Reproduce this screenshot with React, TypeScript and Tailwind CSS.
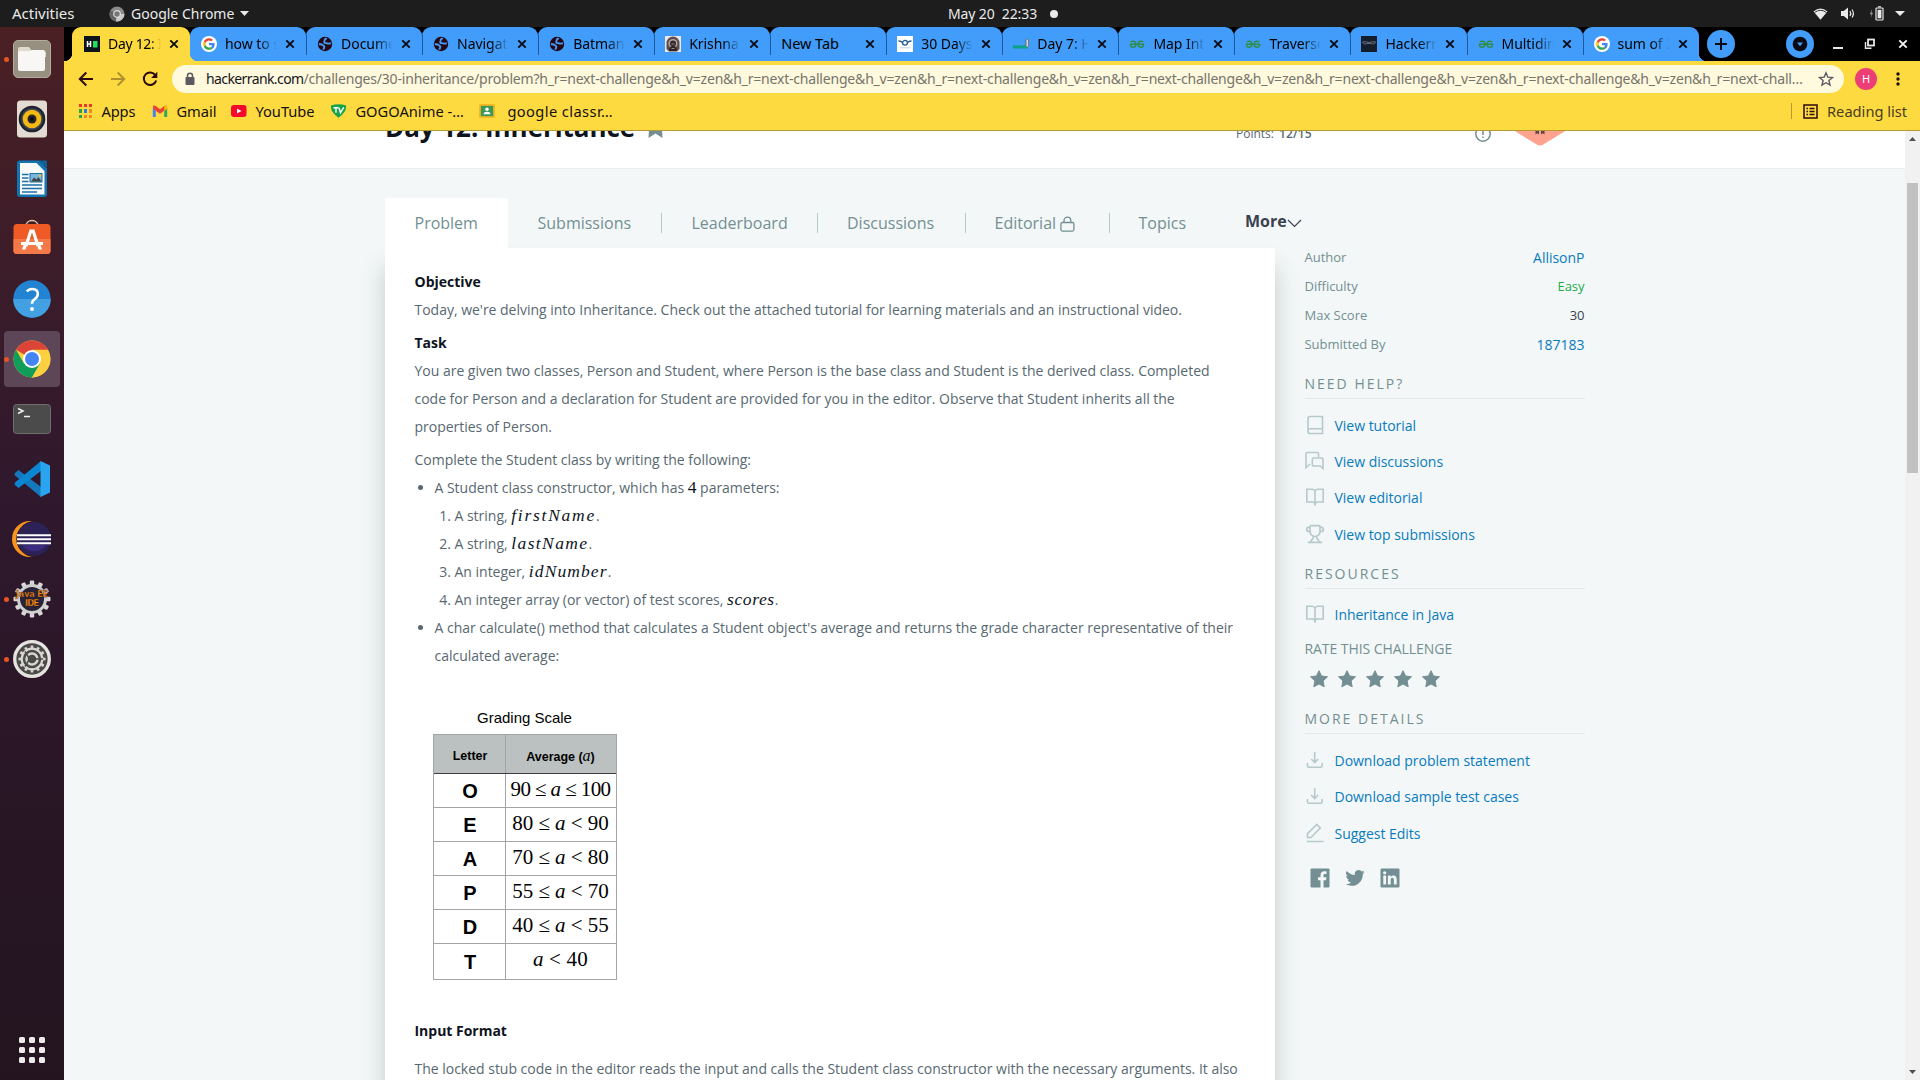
import React from "react";
import { Trophy } from "lucide-react";

const UI = "font-['Noto_Sans',sans-serif]";

/* ---------- favicons ---------- */

const HackerRankIcon = () => (
  <svg className="size-4 shrink-0" viewBox="0 0 16 16">
    <rect width="16" height="16" fill="#0e141e" />
    <path d="M3.5 5v6M6.5 5v6M3.5 8h3" stroke="#fff" strokeWidth="1.5" />
    <rect x="9" y="5" width="4.5" height="6.5" fill="#1ee05a" />
  </svg>
);

const GoogleIcon = () => (
  <svg className="size-4" viewBox="0 0 48 48">
    <circle cx="24" cy="24" r="24" fill="#fff" />
    <g transform="translate(6.5 6.5) scale(.73)">
      <path fill="#EA4335" d="M24 9.5c3.54 0 6.71 1.22 9.21 3.6l6.85-6.85C35.9 2.38 30.47 0 24 0 14.62 0 6.51 5.38 2.56 13.22l7.98 6.19C12.43 13.72 17.74 9.5 24 9.5z" />
      <path fill="#4285F4" d="M46.98 24.55c0-1.57-.15-3.09-.38-4.55H24v9.02h12.94c-.58 2.96-2.26 5.48-4.78 7.18l7.73 6c4.51-4.18 7.09-10.36 7.09-17.65z" />
      <path fill="#FBBC05" d="M10.53 28.59c-.48-1.45-.76-2.99-.76-4.59s.27-3.14.76-4.59l-7.98-6.19C.92 16.46 0 20.12 0 24c0 3.88.92 7.54 2.56 10.78l7.97-6.19z" />
      <path fill="#34A853" d="M24 48c6.48 0 11.93-2.13 15.89-5.81l-7.73-6c-2.15 1.45-4.92 2.3-8.16 2.3-6.26 0-11.57-4.22-13.47-9.91l-7.98 6.19C6.51 42.62 14.62 48 24 48z" />
    </g>
  </svg>
);

const GlobeIcon = () => (
  <svg className="size-4" viewBox="0 0 16 16">
    <circle cx="8" cy="8" r="7.2" fill="#260714" />
    <path
      d="M1.800 8.300C3.500 8 5 8.300 6 9.300c.8.800 1.500.7 1.300 1.800-.1.900-.9 1.100-.8 2.700M9.800 2.200C8.500 3 7.300 3.200 7.600 4.500c.2 1-.8 1.300-.3 2.100.6.900 2 .2 3 .8.9.6 1.800.2 3.600-.2"
      fill="none"
      stroke="#429cf9"
      strokeWidth="1.900"
    />
  </svg>
);

const KrishnaIcon = () => (
  <svg className="size-4" viewBox="0 0 16 16">
    <rect width="16" height="16" fill="#ece8e8" />
    <path d="M1.500 13V7a6.500 6.500 0 0 1 13 0v6L12 15.500H4z" fill="#5f4c4d" />
    <circle cx="8" cy="7.500" r="4.500" fill="#b3a6a2" />
    <circle cx="8" cy="7.500" r="3" fill="#33262a" />
    <path d="M4 15c0-3.500 1.500-5 4-5s4 1.500 4 5z" fill="#2d2226" />
    <path d="M6.500 8h3M6.500 12.500h3" stroke="#b3a6a2" strokeWidth=".8" />
  </svg>
);

const DaysIcon = () => (
  <svg className="size-4" viewBox="0 0 16 16">
    <rect width="16" height="16" fill="#fff" />
    <path d="M1.500 5c2 0 3 .3 4 1.500M14.500 5c-2 0-3 .3-4 1.500" stroke="#1f5a8c" strokeWidth="1.400" fill="none" />
    <circle cx="8" cy="6.800" r="2.400" fill="none" stroke="#1f5a8c" strokeWidth="1.300" />
    <path d="M2.500 11.800h11" stroke="#b9c6d2" strokeWidth=".8" />
  </svg>
);

const Day7Icon = () => (
  <svg className="size-4" viewBox="0 0 16 16">
    <path d="M0 9.500c2-.8 3 .6 5-.1s4 .6 6 .1 3 0 4-.3v3.200H0z" fill="#0ba284" />
    <path d="M13 10.500V4a1.400 1.400 0 0 1 2.600 0v6.500" fill="#d8d5cf" stroke="#555" strokeWidth=".7" />
  </svg>
);

const GfgIcon = () => (
  <svg className="size-4" viewBox="0 0 16 16" fill="none" stroke="#2f8d46" strokeWidth="1.500">
    <path d="M1 8.200h14M2 6C3.200 4.600 7 4.800 7 8.200s-3.800 3.600-5 2.200c-.5-.6-.6-1.400-.5-2.200M14 6c-1.200-1.400-5-1.200-5 2.200s3.800 3.600 5 2.200c.5-.6.6-1.400.5-2.200" />
  </svg>
);

const DarkIcon = () => (
  <svg className="size-4" viewBox="0 0 16 16">
    <rect width="16" height="16" fill="#151c2c" />
    <path d="M1.500 6c2-.6 4 0 6.500.5 2.500-.5 4.500-1.100 6.500-.5-.5 1.800-2.500 2.400-4 1.700L8 7.300l-2.500.4C4 8.400 2 7.800 1.500 6z" fill="none" stroke="#8a909c" strokeWidth=".7" />
  </svg>
);

const tabs: { icon: React.ReactNode; title: string }[] = [
  { icon: <GoogleIcon />, title: "how to s" },
  { icon: <GlobeIcon />, title: "Docume" },
  { icon: <GlobeIcon />, title: "Navigati" },
  { icon: <GlobeIcon />, title: "Batman" },
  { icon: <KrishnaIcon />, title: "Krishna" },
  { icon: null, title: "New Tab" },
  { icon: <DaysIcon />, title: "30 Days" },
  { icon: <Day7Icon />, title: "Day 7: H" },
  { icon: <GfgIcon />, title: "Map Int" },
  { icon: <GfgIcon />, title: "Traverse" },
  { icon: <DarkIcon />, title: "Hackerr" },
  { icon: <GfgIcon />, title: "Multidin" },
  { icon: <GoogleIcon />, title: "sum of 2" },
];

const CloseX = ({ color = "#0b0b14" }: { color?: string }) => (
  <svg className="size-2.5 shrink-0" viewBox="0 0 10 10">
    <path d="M1.300 1.300l7.400 7.400M8.700 1.300L1.300 8.700" stroke={color} strokeWidth="1.900" />
  </svg>
);

const TabStrip = () => (
  <div className="flex h-[34px] bg-black pl-2">
    <div className="relative z-10 flex w-[118px] shrink-0 items-center rounded-t-[9px] bg-[#fddb40] pb-[1px] pl-3">
      <span className="absolute bottom-0 -left-2 size-2 bg-[radial-gradient(circle_at_0_0,transparent_8px,#fddb40_8.5px)]" />
      <span className="absolute -right-2 bottom-0 size-2 bg-[radial-gradient(circle_at_100%_0,transparent_8px,#fddb40_8.5px)]" />
      <HackerRankIcon />
      <span className="ml-2 w-[53px] overflow-hidden text-[14px] tracking-[-0.3px] whitespace-nowrap text-black [mask-image:linear-gradient(to_right,black_80%,transparent)]">
        Day 12: I
      </span>
      <span className="ml-2 flex">
        <CloseX />
      </span>
    </div>
    {tabs.map((t, i) => (
      <div key={i} className="relative flex w-[116.05px] shrink-0 items-center rounded-t-[9px] bg-[#429cf9] pb-[1px] pl-[11px]">
        {i > 0 && <span className="absolute top-2 bottom-1.5 left-0 w-px bg-[#1d5a9c]" />}
        {t.icon && <span className="mr-2 shrink-0">{t.icon}</span>}
        {t.icon ? (
          <span className="w-[52px] overflow-hidden text-[14px] tracking-[-0.05px] whitespace-nowrap text-black [mask-image:linear-gradient(to_right,black_65%,transparent)]">
            {t.title}
          </span>
        ) : (
          <span className="w-[79px] text-[14.500px] tracking-[-0.05px] whitespace-nowrap text-black">{t.title}</span>
        )}
        <span className={t.icon ? "ml-2 flex" : "ml-[5px] flex"}>
          <CloseX />
        </span>
        {i === tabs.length - 1 && (
          <span className="absolute -right-2 bottom-0 size-2 bg-[radial-gradient(circle_at_100%_0,transparent_8px,#429cf9_8.5px)]" />
        )}
      </div>
    ))}
    <div className="flex flex-1 items-center justify-between pr-3 pl-[8px]">
      <span className="flex size-7 items-center justify-center rounded-full bg-[#429cf9]">
        <svg className="size-3.5" viewBox="0 0 14 14">
          <path d="M7 1v12M1 7h12" stroke="#0a0a14" strokeWidth="2" />
        </svg>
      </span>
      <div className="flex items-center">
        <span className="flex size-7 items-center justify-center rounded-full bg-[#429cf9]">
          <svg className="size-4" viewBox="0 0 16 16">
            <circle cx="8" cy="8" r="7.300" fill="#0a0a14" />
            <path d="M5 6.500h6L8 10.200z" fill="#429cf9" />
          </svg>
        </span>
        <svg className="ml-[18px] h-3 w-3" viewBox="0 0 12 12">
          <path d="M1 10h10" stroke="#e8e8e8" strokeWidth="2" />
        </svg>
        <svg className="ml-5 h-3 w-3" viewBox="0 0 12 12" fill="none" stroke="#e8e8e8">
          <rect x="4" y="1.500" width="6" height="6" strokeWidth="1.800" />
          <path d="M1.500 4v6.300h6" strokeWidth="1.400" />
        </svg>
        <span className="ml-[22px] flex">
          <CloseX color="#f2f2f2" />
        </span>
      </div>
    </div>
  </div>
);

const Toolbar = () => (
  <div className="flex h-9 items-center bg-[#fddb40] pl-[14px]">
    <svg className="size-4" viewBox="0 0 16 16" fill="none" stroke="#2b0a10" strokeWidth="2">
      <path d="M15 8H2.500M8.300 1.500L1.800 8l6.500 6.500" />
    </svg>
    <svg className="ml-4 size-4" viewBox="0 0 16 16" fill="none" stroke="#b0902f" strokeWidth="2">
      <path d="M1 8h12.500M7.700 1.500L14.200 8l-6.500 6.500" />
    </svg>
    <svg className="ml-4 size-4" viewBox="0 0 16 16" fill="none" stroke="#2b0a10" strokeWidth="2">
      <path d="M13.400 4.200A6.300 6.300 0 1 0 14.200 9.500" />
      <path d="M15.300 0.800V7H9.100z" fill="#2b0a10" stroke="none" />
    </svg>
    <div className="ml-[14px] flex h-7 w-[1672px] items-center rounded-full bg-[#fff9de] pl-[13px]">
      <svg className="h-3.5 w-[10px] shrink-0" viewBox="0 0 10 14">
        <rect x="0.500" y="5" width="9" height="8" rx="1" fill="#5c5960" />
        <path d="M2.500 5.500V3.700a2.500 2.500 0 0 1 5 0v1.800" fill="none" stroke="#5c5960" strokeWidth="1.500" />
      </svg>
      <div className="ml-[11px] w-[1600px] text-[14px] leading-7 whitespace-nowrap text-[#76746b]">
        <span className="tracking-[-0.6px] text-[#16161c]">hackerrank.com</span>
        <span className="tracking-[-0.193px]">
          /challenges/30-inheritance/problem?h_r=next-challenge&amp;h_v=zen&amp;h_r=next-challenge&amp;h_v=zen&amp;h_r=next-challenge&amp;h_v=zen&amp;h_r=next-challenge&amp;h_v=zen&amp;h_r=next-challenge&amp;h_v=zen&amp;h_r=next-challenge&amp;h_v=zen&amp;h_r=next-chall…
        </span>
      </div>
      <svg className="ml-[12px] size-4 shrink-0" viewBox="0 0 16 16" fill="none" stroke="#5c5960" strokeWidth="1.400">
        <path d="M8 1.800l1.800 4.300 4.700.4-3.600 3 1.100 4.600L8 11.700l-4 2.400 1.100-4.600-3.600-3 4.700-.4z" />
      </svg>
    </div>
    <span className="ml-[11px] flex size-[22px] items-center justify-center rounded-full bg-[#ec3d74] text-[11px] text-white">H</span>
    <svg className="ml-[19px] h-4 w-1" viewBox="0 0 4 16" fill="#1d1014">
      <circle cx="2" cy="3" r="1.700" />
      <circle cx="2" cy="8" r="1.700" />
      <circle cx="2" cy="13" r="1.700" />
    </svg>
  </div>
);

const appDots = [
  "bg-[#e8392b]",
  "bg-[#e8392b]",
  "bg-[#e8392b]",
  "bg-[#2ba24c]",
  "bg-[#2b7de9]",
  "bg-[#f08a1c]",
  "bg-[#2ba24c]",
  "bg-[#f08a1c]",
  "bg-[#f08a1c]",
];

const Bookmarks = () => (
  <div className="flex h-[33px] items-center bg-[#fddb40] pb-[5px] pl-[14.500px] text-[14.67px] text-[#151010]">
    <div className="grid grid-cols-3 gap-[2px]">
      {appDots.map((c, i) => (
        <span key={i} className={"size-[3.3px] " + c} />
      ))}
    </div>
    <span className="ml-[9px] w-[36px] tracking-[-0.1px]">Apps</span>
    <svg className="ml-[15px] h-[12px] w-[16px]" viewBox="0 0 16 12">
      <path d="M0.800 2v10h3V5.500z" fill="#4285f4" />
      <path d="M15.200 2v10h-3V5.500z" fill="#34a853" />
      <path d="M0.800 1.500C1.500 0 3 .4 3.800 1L8 4.200 12.200 1c.8-.6 2.300-1 3 .5L14 4.600 8 8.800 2 4.600z" fill="#ea4335" />
      <path d="M12.200 1c1.500-1 3-.4 3 1.200v1.600l-3 2.300z" fill="#fbbc04" />
    </svg>
    <span className="ml-[8px] w-[40px]">Gmail</span>
    <svg className="ml-[15px] h-[12px] w-[16px]" viewBox="0 0 16 12">
      <rect width="15.500" height="12" rx="3" fill="#f50a2c" />
      <path d="M6 3.500v5L10.500 6z" fill="#fff" />
    </svg>
    <span className="ml-[8px] w-[61px]">YouTube</span>
    <svg className="ml-[14px] h-[14px] w-[17px]" viewBox="0 0 17 14">
      <path d="M1 1.500Q8.500-.8 16 1.500 17 8 8.500 13.800 0 8 1 1.500z" fill="#17a349" />
      <path d="M3.500 3.800h5M6 3.800v5M9 3.800l1.500 5 3.200-5.500" stroke="#fff" strokeWidth="1.400" fill="none" />
    </svg>
    <span className="ml-[8px] w-[111px] tracking-[0.02px]">GOGOAnime -…</span>
    <svg className="ml-[13px] h-[14px] w-[16px]" viewBox="0 0 16 14">
      <rect width="16" height="14" rx="1.500" fill="#f5b921" />
      <rect x="1.800" y="1.800" width="12.400" height="10.400" fill="#3c9759" />
      <circle cx="8" cy="5.300" r="1.700" fill="#fff" />
      <path d="M4.500 10.200q0-2.500 3.500-2.500t3.500 2.500z" fill="#fff" />
    </svg>
    <span className="ml-[12px] tracking-[0.4px]">google classr…</span>
    <div className="mr-[13px] ml-auto flex items-center">
      <span className="h-4 w-px bg-[#b99a30]" />
      <svg className="ml-[11px] size-[15px]" viewBox="0 0 15 15" fill="none" stroke="#2b0a10" strokeWidth="1.500">
        <rect x="1" y="1" width="13" height="13" />
        <path d="M3.500 4.500h1.500M6.500 4.500h5M3.500 7.500h1.500M6.500 7.500h5M3.500 10.500h1.500M6.500 10.500h5" />
      </svg>
      <span className="ml-[9px] w-[80px] whitespace-nowrap text-[#4a3c1e]">Reading list</span>
    </div>
  </div>
);

/* ---------- desktop shell ---------- */

const TopBar = () => (
  <header className="grid h-[27px] grid-cols-3 items-center bg-[#1d1d1d] text-[15px] text-[#eaeaea]">
    <div className="flex items-center pl-3">
      <span className="w-[97px]">Activities</span>
      <svg className="size-4" viewBox="0 0 16 16">
        <circle cx="8" cy="8" r="7.500" fill="#8a8a8a" />
        <path d="M8 8L1.500 4.200A7.500 7.500 0 0 0 7 15.400z" fill="#646464" />
        <path d="M8 8h7.500A7.500 7.500 0 0 1 7 15.400z" fill="#c9c9c9" />
        <circle cx="8" cy="8" r="3.300" fill="#777" stroke="#ddd" strokeWidth="1.200" />
      </svg>
      <span className="ml-[6px] text-[14px]">Google Chrome</span>
      <svg className="ml-[6px] h-[5px] w-[9px]" viewBox="0 0 9 5">
        <path d="M0 0h9L4.500 5z" fill="#eaeaea" />
      </svg>
    </div>
    <div className="flex items-center justify-center pl-[86px] text-[14px]">
      <span className="tracking-[-0.1px] whitespace-pre">May 20  22:33</span>
      <span className="ml-[13px] size-2 rounded-full bg-[#eaeaea]" />
    </div>
    <div className="flex items-center justify-end pr-[15px]">
      <svg className="h-3 w-[15px]" viewBox="0 0 15 12">
        <path d="M0.500 3.500Q7.500-2.300 14.500 3.500L7.500 11.800z" fill="#eaeaea" />
        <path d="M1.500 4.500Q7.500 0 13.500 4.500" fill="none" stroke="#1d1d1d" strokeWidth=".9" />
      </svg>
      <svg className="ml-[13px] h-[13px] w-[15px]" viewBox="0 0 15 13">
        <path d="M0 4h2.800L7 .5v12L2.800 9H0z" fill="#eaeaea" />
        <path d="M9 4q1.500 2.500 0 5M11 2.500q2.800 4 0 8" fill="none" stroke="#eaeaea" strokeWidth="1.200" />
      </svg>
      <svg className="ml-[13px] h-[15px] w-[15px]" viewBox="0 0 15 15">
        <path d="M3 3L.8 8.300h1.700L1.800 12 4 6.800H2.500z" fill="#999" />
        <rect x="7" y="2" width="7" height="12" rx=".8" fill="none" stroke="#eaeaea" strokeWidth="1.200" />
        <rect x="8.600" y="3.800" width="3.800" height="8.500" fill="#eaeaea" />
        <path d="M9 .8h3" stroke="#eaeaea" strokeWidth="1.200" />
      </svg>
      <svg className="ml-[11px] h-[5px] w-[10px]" viewBox="0 0 10 5">
        <path d="M0 0h10L5 5z" fill="#eaeaea" />
      </svg>
    </div>
  </header>
);

const FilesIcon = () => (
  <svg className="size-10" viewBox="0 0 40 40">
    <rect x="1.500" y="1.500" width="37" height="37" rx="4.500" fill="#978f7f" stroke="#b5ad9b" />
    <path d="M6 31V10a2 2 0 0 1 2-2h9l3 4h12a2 2 0 0 1 2 2v4H6z" fill="#e0dace" />
    <path d="M6 14q0-2 2-2h9q1.500 0 3-1h11q2 0 2 2v17q0 2-2 2H8q-2 0-2-2z" fill="#f8f7f5" />
  </svg>
);
const RhythmIcon = () => (
  <svg className="size-10" viewBox="0 0 40 40">
    <rect x="5" y="1.500" width="30" height="37" rx="3.500" fill="#e2dcd2" />
    <circle cx="20" cy="20" r="13.300" fill="#20242e" />
    <circle cx="20" cy="20" r="10.800" fill="#3c4557" />
    <circle cx="20" cy="20" r="9.300" fill="#f3b911" />
    <circle cx="20" cy="20" r="4.500" fill="#24242a" />
    <circle cx="20" cy="20" r="2" fill="#08080a" />
  </svg>
);
const WriterIcon = () => (
  <svg className="size-10" viewBox="0 0 40 40">
    <path d="M8 1.500h19L35 9.500V35a3 3 0 0 1-3 3H8a3 3 0 0 1-3-3V4.500a3 3 0 0 1 3-3z" fill="#1274b0" />
    <path d="M26 1.500h9V9z" fill="#0f6296" />
    <path d="M8 4h16.500L32.500 12v23.500H8z" fill="#f8f9fa" />
    <path d="M10 15.500h6.500M10 19h6.500M10 22.500h6.500M10 26h20M10 29.500h20M10 33h15" stroke="#1a71a8" strokeWidth="1.500" />
    <rect x="18" y="14.500" width="12" height="8.500" fill="#79b5dc" stroke="#1a71a8" />
    <path d="M19 22.500l3-4 2.500 2 2-2.500 3 4.500z" fill="#444" />
    <circle cx="28" cy="16.800" r="1.300" fill="#f5c327" />
  </svg>
);
const SoftwareIcon = () => (
  <svg className="size-10" viewBox="0 0 40 40">
    <path d="M14 7.500C14 -.5 26 -.5 26 7.500" fill="none" stroke="#e8c9a0" strokeWidth="1.500" />
    <rect x="1.500" y="5" width="37" height="30" rx="3.500" fill="#f05a24" />
    <path d="M1.500 20h37v11.500a3.500 3.500 0 0 1-3.500 3.500H5a3.500 3.500 0 0 1-3.500-3.500z" fill="#f37a48" />
    <path d="M14 27l4.800-15h2.400L26 27" stroke="#fff" strokeWidth="3.200" fill="none" />
    <path d="M9 23h22v3H9zM11.500 26h3.500l-1.500 4.500h-3.500zM28.500 26H25l1.500 4.500h3.500z" fill="#fff" />
  </svg>
);
const HelpIcon = () => (
  <svg className="size-10" viewBox="0 0 40 40">
    <circle cx="20" cy="20" r="18.700" fill="#2283d2" />
    <path d="M1.300 20a18.700 18.700 0 0 0 37.400 0z" fill="#42a0e3" />
    <path d="M14.800 12.500q2-2.500 5.400-2.500 5.600 0 5.600 5 0 2.800-3 5-2.800 2-2.800 4.700" fill="none" stroke="#fff" strokeWidth="2.500" />
    <circle cx="20" cy="30" r="2" fill="#fff" />
  </svg>
);
const ChromeIcon = () => (
  <svg className="size-10" viewBox="0 0 40 40">
    <circle cx="20" cy="20" r="18.500" fill="#fcd03f" />
    <path d="M20 20L4 10.800A18.500 18.500 0 0 1 36 10.800H20z" fill="#dc4437" />
    <path d="M4 10.800A18.500 18.500 0 0 0 20 38.500L28 24.500 12 24.500z" fill="#109d59" />
    <path d="M36 11H20l8 14-8 13.500A18.500 18.500 0 0 0 36 11z" fill="#fcd03f" />
    <circle cx="20" cy="20" r="9" fill="#fff" />
    <circle cx="20" cy="20" r="7" fill="#4585f3" />
  </svg>
);
const TerminalIcon = () => (
  <svg className="size-10" viewBox="0 0 40 40">
    <rect x="1.500" y="5.500" width="37" height="29" rx="3" fill="#4b4b4b" stroke="#6e6e6e" />
    <path d="M6 9.500l5 2.500-5 2.500M12 17.500h6" fill="none" stroke="#f0f0f0" strokeWidth="1.500" />
  </svg>
);
const CodeIcon = () => (
  <svg className="size-10" viewBox="0 0 40 40">
    <path d="M2.500 14.500L6.500 11 29 28v10L3 16.500z" fill="#1478bd" />
    <path d="M2.500 25.500L6.500 29 29 12V2L3 23.500z" fill="#0b86d0" />
    <path d="M28.500 2L38 6.500v27L28.500 38z" fill="#2aa4f0" />
  </svg>
);
const EclipseIcon = () => (
  <svg className="size-10" viewBox="0 0 40 40">
    <circle cx="18" cy="20" r="18" fill="#f7941e" />
    <circle cx="22.300" cy="20" r="17.500" fill="#2c2255" stroke="#2b1429" />
    <path d="M10 26a13 10 0 0 0 24 0z" fill="#3b2c80" />
    <path d="M5 16.300h34M5 20.300h34M5 24.300h34" stroke="#fff" strokeWidth="2" />
  </svg>
);
const gearTeeth = [0, 30, 60, 90, 120, 150, 180, 210, 240, 270, 300, 330];
const JavaEEIcon = () => (
  <svg className="size-10" viewBox="0 0 40 40">
    {gearTeeth.map((a) => (
      <rect key={a} x="17.800" y="1.500" width="4.400" height="7" rx="1" fill="#d7d7d7" transform={`rotate(${a} 20 20)`} />
    ))}
    <circle cx="20" cy="20" r="13.500" fill="#29233a" stroke="#cfcfcf" strokeWidth="3" />
    <text x="20" y="18" textAnchor="middle" fill="#ff8c1a" stroke="#2a1408" strokeWidth=".3" className="font-['DejaVu_Sans',sans-serif] text-[8px] font-bold" textLength="32">
      Java EE
    </text>
    <text x="20" y="27" textAnchor="middle" fill="#ff8c1a" stroke="#2a1408" strokeWidth=".3" className="font-['DejaVu_Sans',sans-serif] text-[8.5px] font-bold" textLength="14">
      IDE
    </text>
  </svg>
);
const SettingsIcon = () => (
  <svg className="size-10" viewBox="0 0 40 40">
    <circle cx="20" cy="20" r="17.300" fill="#4a4a48" stroke="#e6e4e0" strokeWidth="3.300" />
    {gearTeeth.map((a) => (
      <rect key={a} x="18.700" y="6.500" width="2.600" height="4" fill="#d8d6d2" transform={`rotate(${a} 20 20)`} />
    ))}
    <circle cx="20" cy="20" r="10.300" fill="none" stroke="#d8d6d2" strokeWidth="2.200" />
    <circle cx="20" cy="20" r="5.500" fill="none" stroke="#d8d6d2" strokeWidth="2.500" />
    <path d="M17.500 20L13 12.500M17.500 20L13 27.500M22 20h9" stroke="#4a4a48" strokeWidth="1.500" />
  </svg>
);

const dock = [
  { Icon: FilesIcon, dot: true },
  { Icon: RhythmIcon },
  { Icon: WriterIcon },
  { Icon: SoftwareIcon },
  { Icon: HelpIcon },
  { Icon: ChromeIcon, dot: true, active: true },
  { Icon: TerminalIcon },
  { Icon: CodeIcon },
  { Icon: EclipseIcon },
  { Icon: JavaEEIcon, dot: true },
  { Icon: SettingsIcon, dot: true },
];

const Dock = () => (
  <nav className="flex w-16 shrink-0 flex-col items-center gap-1 bg-linear-to-b from-[#4a2024] via-[#2f182d] via-45% to-[#23141f] pt-1">
    {dock.map(({ Icon, dot, active }, i) => (
      <div
        key={i}
        className={"relative flex size-14 items-center justify-center rounded " + (active ? "bg-[#5c4658]" : "")}
      >
        {dot && <span className="absolute top-[25.5px] left-0 size-[5px] rounded-full bg-[#e95420]" />}
        <Icon />
      </div>
    ))}
    <div className="mt-auto mb-[17px] grid grid-cols-3 gap-1">
      {Array.from({ length: 9 }, (_, i) => (
        <span key={i} className="size-1.5 rounded-[1.5px] bg-[#efebeb]" />
      ))}
    </div>
  </nav>
);

/* ---------- page ---------- */

const PageHeader = () => (
  <div className="h-[38px] shrink-0 overflow-hidden border-b border-[#e9eeee] bg-white pl-[321px]">
    <div className="-mt-5 flex h-10 items-start">
      <h1 className="w-[263px] text-[26px] leading-8 font-bold tracking-[-0.05px] whitespace-nowrap text-[#0e141e]">Day 12: Inheritance</h1>
      <svg className="mt-[10px] h-[17px] w-[15px]" viewBox="0 0 14 17">
        <path d="M1 0h12l1 17-7-4.500L0 17z" fill="#738f93" />
      </svg>
      <p className="mt-[13px] ml-[573px] text-[12px] leading-5 whitespace-nowrap text-[#576871]">
        Points: <b className="ml-0.5 font-semibold tracking-[0.1px]">12/15</b>
      </p>
      <svg className="mt-[15px] ml-[163px] size-4" viewBox="0 0 16 16" fill="none" stroke="#738f93" strokeWidth="1.500">
        <circle cx="8" cy="8" r="7.200" />
        <path d="M8 4v5M8 10.500v1.500" />
      </svg>
      <svg className="ml-[21px] h-[35px] w-[56px]" viewBox="0 0 56 35">
        <path d="M0 0h56v18Q52 21 32 33q-4 3-8 0Q4 21 0 18z" fill="#ffa38f" />
        <path d="M23.500 23.500v-4h3.500v4l-1.700-1.200zM29 23.500v-4h3.500v4l-1.700-1.200z" fill="#5f4348" />
      </svg>
    </div>
  </div>
);

const Sep = () => <span className="h-5 w-px bg-[#b7c9cc]" />;

const NavTabs = () => (
  <div className="flex h-[50px] items-center text-[16px] text-[#738f93]">
    <a className="relative z-10 flex h-full w-[123px] items-center bg-white pl-[29.500px]">Problem</a>
    <a className="w-[153px] pl-[29.500px]">Submissions</a>
    <Sep />
    <a className="w-[155px] pl-[29.5px]">Leaderboard</a>
    <Sep />
    <a className="w-[147px] pl-[29px]">Discussions</a>
    <Sep />
    <a className="flex w-[143px] items-center pl-[28.5px]">
      <span className="w-[61px]">Editorial</span>
      <svg className="mt-[2px] ml-[4px] h-[16px] w-[15px]" viewBox="0 0 15 16" fill="none" stroke="#738f93" strokeWidth="1.300">
        <rect x=".9" y="6.500" width="13" height="8.600" rx="1.500" />
        <path d="M4 6.500V4.500a3.400 3.400 0 0 1 6.800 0v2" />
      </svg>
    </a>
    <Sep />
    <a className="w-[135px] pl-[28.5px]">Topics</a>
    <span className="-mt-[4px] flex items-center font-bold text-[#39424e]">
      More
      <svg className="mt-1 h-[9px] w-[15px]" viewBox="0 0 15 9" fill="none" stroke="#39424e" strokeWidth="1.200">
        <path d="M1 1l6.500 6.500L14 1" />
      </svg>
    </span>
  </div>
);

const M = ({ children, className = "" }: { children: string; className?: string }) => (
  <span className={"inline-block font-['Liberation_Serif',serif] text-[17.5px] leading-none text-[#0e141e] italic " + className}>{children}</span>
);

const grades: [string, React.ReactNode, string][] = [
  ["O", <>90 ≤ <i>a</i> ≤ 100</>, "tracking-[-0.6px]"],
  ["E", <>80 ≤ <i>a</i> &lt; 90</>, "tracking-[-0.05px]"],
  ["A", <>70 ≤ <i>a</i> &lt; 80</>, "tracking-[-0.05px]"],
  ["P", <>55 ≤ <i>a</i> &lt; 70</>, "tracking-[-0.05px]"],
  ["D", <>40 ≤ <i>a</i> &lt; 55</>, "tracking-[-0.05px]"],
  ["T", <><i>a</i> &lt; 40</>, "tracking-[0.2px]"],
];

const GradingTable = () => (
  <div className="mt-[36px] ml-[18px] w-[184px] font-['Liberation_Sans',sans-serif] text-black">
    <div className="h-[28px] text-center text-[15px] leading-6">Grading Scale</div>
    <div className="border border-[#a3a5a5]">
      <div className="flex h-[39px] border-b border-[#3c3e3e] bg-[#bbc0c0] text-[12.5px] font-bold">
        <span className="flex w-[72px] items-center justify-center border-r border-[#a3a5a5] pt-1 pl-0.5">Letter</span>
        <span className="flex flex-1 items-center justify-center pt-[5px]">
          <span>
            Average (<i className="font-['Liberation_Serif',serif] text-[16px] leading-3 font-normal">a</i>)
          </span>
        </span>
      </div>
      {grades.map(([letter, range, tracking]) => (
        <div key={letter} className="flex h-[34.1px] border-b border-[#a3a5a5] last:border-b-0">
          <span className="flex w-[72px] items-center justify-center border-r border-[#a3a5a5] pt-px pl-0.5 text-[20px] font-bold">{letter}</span>
          <span
            className={
              "flex-1 text-center font-['Liberation_Serif',serif] text-[21px] leading-[31px] whitespace-nowrap " + tracking
            }
          >
            {range}
          </span>
        </div>
      ))}
    </div>
  </div>
);

const Article = () => (
  <article className="h-[900px] w-[890px] shrink-0 bg-white px-[29.5px] pt-[20px] text-[14px] leading-7 tracking-[-0.014px] text-[#576871] shadow-[0_20px_22px_rgba(57,66,78,0.25)]">
    <h2 className="font-bold text-[#0e141e]">Objective</h2>
    <p className="mb-[5px]">Today, we're delving into Inheritance. Check out the attached tutorial for learning materials and an instructional video.</p>
    <h2 className="font-bold text-[#0e141e]">Task</h2>
    <p className="mb-[5px] whitespace-pre-line">
      {"You are given two classes, Person and Student, where Person is the base class and Student is the derived class. Completed\ncode for Person and a declaration for Student are provided for you in the editor. Observe that Student inherits all the\nproperties of Person."}
    </p>
    <p>Complete the Student class by writing the following:</p>
    <ul className="list-disc pl-5">
      <li className="h-7">
        A Student class constructor, which has <M className="not-italic">4</M> parameters:
      </li>
    </ul>
    <ol className="list-decimal pl-10 [&>li]:h-7">
      <li>A string, <M className="tracking-[1.75px]">firstName</M>.</li>
      <li>A string, <M className="tracking-[1.4px]">lastName</M>.</li>
      <li>An integer, <M className="tracking-[1.1px]">idNumber</M>.</li>
      <li>An integer array (or vector) of test scores, <M className="tracking-[0.6px]">scores</M>.</li>
    </ol>
    <ul className="list-disc pl-5">
      <li className="whitespace-pre-line">
        {"A char calculate() method that calculates a Student object's average and returns the grade character representative of their\ncalculated average:"}
      </li>
    </ul>
    <GradingTable />
    <h2 className="mt-[37px] font-bold text-[#0e141e]">Input Format</h2>
    <p className="mt-[10px] whitespace-nowrap">The locked stub code in the editor reads the input and calls the Student class constructor with the necessary arguments. It also</p>
  </article>
);

const svgProps = {
  className: "size-5",
  viewBox: "0 0 20 20",
  fill: "none",
  stroke: "#b7c9cc",
  strokeWidth: 1.6,
};

const BookIcon = () => (
  <svg {...svgProps}>
    <path d="M17.500 1.500H5Q3 1.500 3 3.500V16.500Q3 18.500 5 18.500H17.500zM3 15.500Q3.500 13.700 5 13.700H17.500" />
  </svg>
);
const ChatIcon = () => (
  <svg {...svgProps}>
    <path d="M13.500 6V2.800Q13.500 1.500 12.200 1.500H2.300Q1 1.500 1 2.800V16.500L5 13" />
    <path d="M8.500 7h8.300q1.200 0 1.200 1.200V17.500L15 15H8.500Q7.300 15 7.300 13.800V8.200Q7.300 7 8.500 7z" />
  </svg>
);
const OpenBookIcon = () => (
  <svg {...svgProps}>
    <path d="M10 4Q9 2.300 7 2.300H1.800V15H8Q10 15 10 18.500Q10 15 12 15H18.200V2.300H13Q11 2.300 10 4V17" />
  </svg>
);
const PencilIcon = () => (
  <svg {...svgProps}>
    <path d="M1.800 18.500h16.700M2.500 14.500v-3.800L11.800 1.500l3.500 3.500L6 14.500z" />
  </svg>
);
const DownloadIcon = () => (
  <svg {...svgProps}>
    <path d="M9.700 2v10M6.200 9l3.500 3.500L13.200 9M2.500 13v3q0 1.300 1.300 1.300h12q1.300 0 1.300-1.300v-3" />
  </svg>
);
const CupIcon = () => <Trophy className="size-5" color="#b7c9cc" strokeWidth={2} />;

const SideLink = ({ Icon, children, h = "h-9" }: { Icon: React.ComponentType; children: string; h?: string }) => (
  <a className={"flex items-center text-[14px] text-[#097bbf] " + h}>
    <span className="w-[30px]">
      <Icon />
    </span>
    {children}
  </a>
);

const SideHeading = ({ children }: { children: string }) => (
  <h3 className="h-[29px] border-b border-[#e4eaea] text-[14px] leading-[28px] tracking-[2px] text-[#738f93]">{children}</h3>
);

const meta = [
  ["Author", "AllisonP", "text-[14px] text-[#097bbf]"],
  ["Difficulty", "Easy", "text-[13px] text-[#1ba94c]"],
  ["Max Score", "30", "text-[13px] text-[#39424e]"],
  ["Submitted By", "187183", "text-[14px] text-[#097bbf]"],
];

const Sidebar = () => (
  <aside className="-mt-[5px] ml-[29.5px] w-[280px] tracking-[-0.02px]">
    {meta.map(([k, v, cls]) => (
      <div key={k} className="flex h-[29px] items-center justify-between text-[13px] text-[#738f93]">
        <span>{k}</span>
        <span className={cls}>{v}</span>
      </div>
    ))}
    <div className="mt-[11px]">
      <SideHeading>NEED HELP?</SideHeading>
    </div>
    <div className="mt-[8px]">
      <SideLink Icon={BookIcon}>View tutorial</SideLink>
      <SideLink Icon={ChatIcon}>View discussions</SideLink>
      <SideLink Icon={OpenBookIcon}>View editorial</SideLink>
      <SideLink Icon={CupIcon} h="h-[38px]">View top submissions</SideLink>
    </div>
    <div className="mt-[7px]">
      <SideHeading>RESOURCES</SideHeading>
    </div>
    <div className="mt-[7px]">
      <SideLink Icon={OpenBookIcon}>Inheritance in Java</SideLink>
    </div>
    <p className="mt-[7px] text-[14px] leading-5 tracking-[-0.06px] text-[#738f93]">RATE THIS CHALLENGE</p>
    <div className="mt-[10px] flex gap-[8px] pl-[4px]">
      {[0, 1, 2, 3, 4].map((i) => (
        <svg key={i} className="size-5" viewBox="0 0 20 20">
          <path
            d="M10 1.700l2.500 5.300 6 .8-4.400 4.100 1.100 5.900L10 15l-5.200 2.800 1.100-5.900L1.500 7.800l6-.8z"
            fill="#738f93"
            stroke="#738f93"
            strokeWidth="1"
            strokeLinejoin="round"
          />
        </svg>
      ))}
    </div>
    <div className="mt-[16px]">
      <SideHeading>MORE DETAILS</SideHeading>
    </div>
    <div className="mt-[8px]">
      <SideLink Icon={DownloadIcon}>Download problem statement</SideLink>
      <SideLink Icon={DownloadIcon}>Download sample test cases</SideLink>
      <SideLink Icon={PencilIcon} h="h-[38px]">Suggest Edits</SideLink>
    </div>
    <div className="mt-[16px] flex gap-[15px] pl-[5px]">
      <svg className="size-5" viewBox="0 0 20 20">
        <path fill="#738f93" d="M1.500.5h17q1 0 1 1v17q0 1-1 1h-5v-7.300h2.500l.4-2.900h-2.900V7.500c0-.9.3-1.400 1.500-1.400h1.500V3.400C16 3.400 15.200 3.300 14.300 3.300c-2.300 0-3.800 1.300-3.800 3.800v2.200H8v2.900h2.500v7.300h-9q-1 0-1-1v-17q0-1 1-1z" />
      </svg>
      <svg className="size-5" viewBox="0 0 24 24">
        <path fill="#738f93" d="M23.500 4.900c-.8.400-1.800.7-2.700.8 1-.6 1.700-1.500 2.100-2.600-.9.500-1.900.9-3 1.100a4.700 4.700 0 0 0-8.100 4.300C7.900 8.300 4.400 6.400 2 3.600a4.700 4.700 0 0 0 1.500 6.300c-.8 0-1.500-.2-2.100-.6 0 2.300 1.600 4.300 3.800 4.700-.7.200-1.400.2-2.100.1.600 1.900 2.300 3.200 4.400 3.300A9.500 9.500 0 0 1 .5 19.300 13.400 13.400 0 0 0 7.800 21.400c8.800 0 13.800-7.400 13.500-14 .9-.7 1.600-1.500 2.200-2.500z" />
      </svg>
      <svg className="size-5" viewBox="0 0 20 20">
        <rect x=".5" y=".5" width="19" height="19" rx="1.200" fill="#738f93" />
        <path fill="#f3f7f7" d="M3.300 7.600h2.800v9H3.300zM4.700 3.200a1.600 1.600 0 1 1 0 3.300 1.600 1.600 0 0 1 0-3.300zM7.900 7.600h2.700v1.300c.5-.9 1.400-1.500 2.700-1.500 2.700 0 3.400 1.700 3.400 4.200v5h-2.800v-4.500c0-1.300-.3-2.300-1.600-2.300s-1.600 1-1.600 2.200v4.600H7.900z" />
      </svg>
    </div>
  </aside>
);

const Scrollbar = () => (
  <div className="flex w-[15px] shrink-0 flex-col items-center bg-[#f1f1f1]">
    <svg className="mt-[6px] h-[4px] w-[7px]" viewBox="0 0 7 4">
      <path d="M0 4L3.500 0 7 4z" fill="#505050" />
    </svg>
    <span className="mt-[42px] h-[290px] w-[11px] bg-[#c1c1c1]" />
    <svg className="mt-auto mb-[6px] h-[4px] w-[7px]" viewBox="0 0 7 4">
      <path d="M0 0L3.500 4 7 0z" fill="#505050" />
    </svg>
  </div>
);

export default function App() {
  return (
    <div className={"flex h-[1080px] w-[1920px] flex-col overflow-hidden " + UI}>
      <TopBar />
      <div className="flex min-h-0 flex-1">
        <Dock />
        <div className="flex min-w-0 flex-1 flex-col">
          <TabStrip />
          <Toolbar />
          <Bookmarks />
          <div className="h-px shrink-0 bg-[#b49b2e]" />
          <div className="flex min-h-0 flex-1 font-['Open_Sans',sans-serif]">
            <main className="flex min-w-0 flex-1 flex-col overflow-hidden bg-[#f3f7f7]">
              <PageHeader />
              <div className="mt-[29px] pl-[321px]">
                <NavTabs />
                <div className="flex items-start">
                  <Article />
                  <Sidebar />
                </div>
              </div>
            </main>
            <Scrollbar />
          </div>
        </div>
      </div>
    </div>
  );
}
